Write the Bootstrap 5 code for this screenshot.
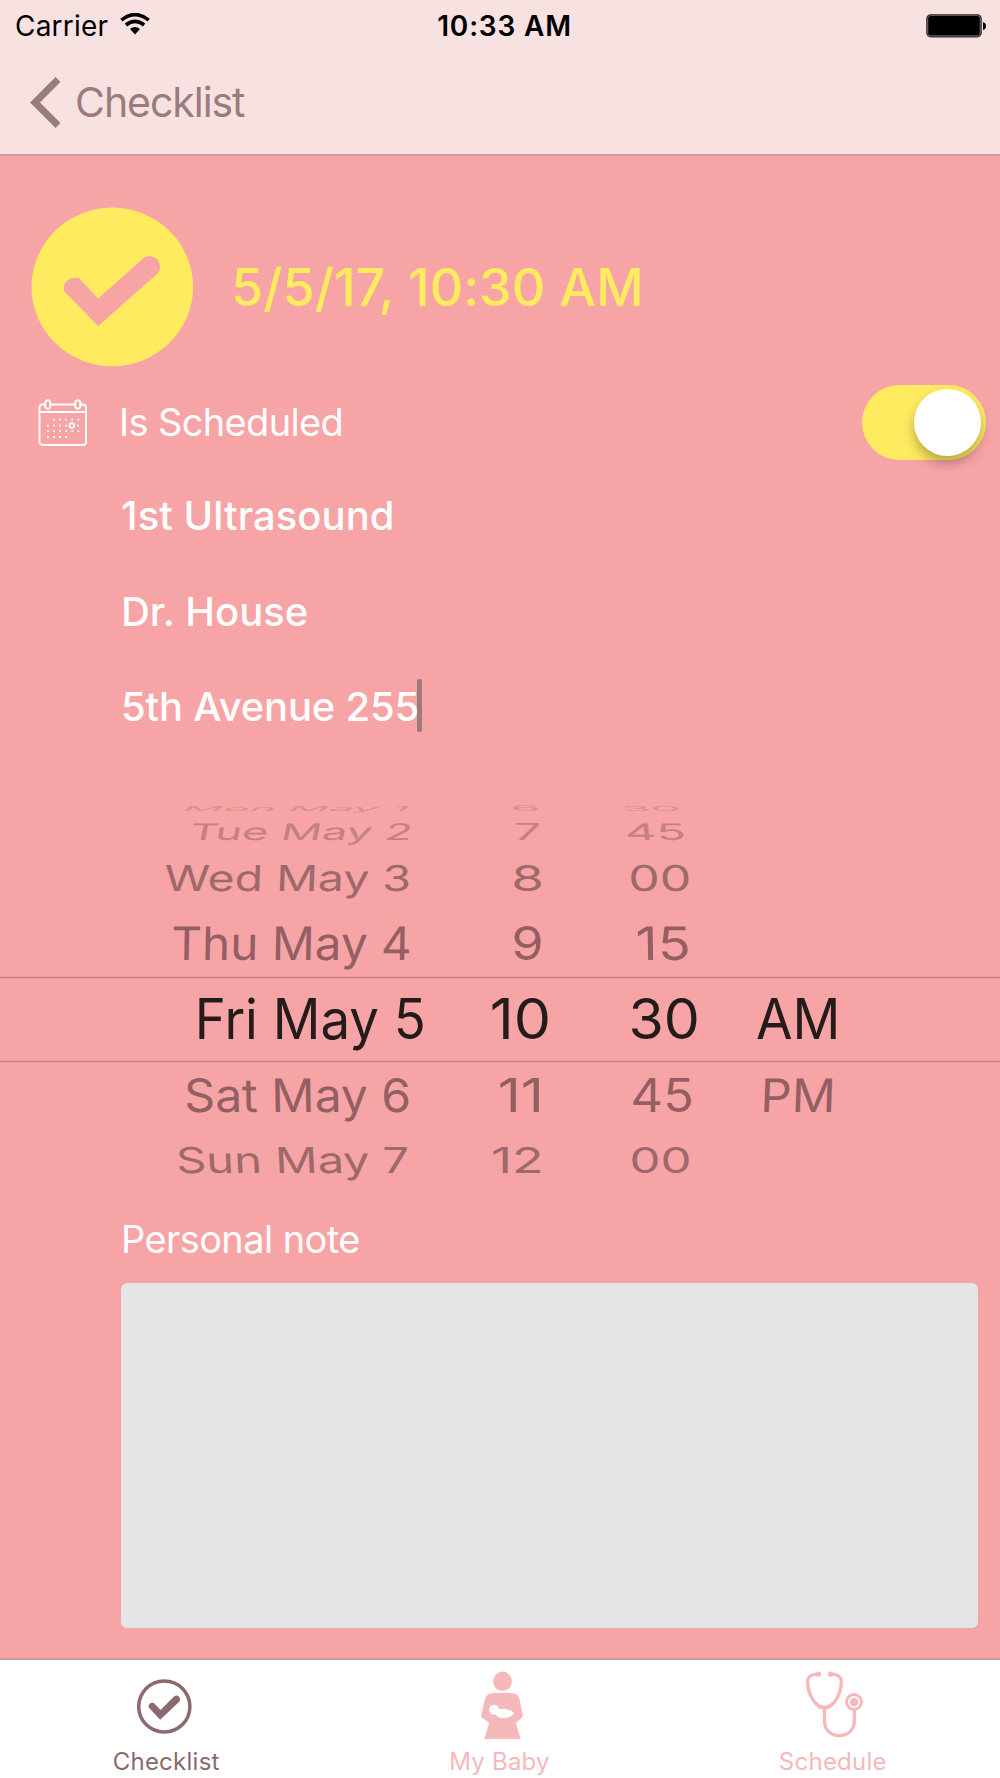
<!DOCTYPE html>
<html lang="en">
<head>
  <meta charset="UTF-8">
  <meta name="viewport" content="width=device-width, initial-scale=1">
  <title>Checklist</title>
  <link href="https://cdn.jsdelivr.net/npm/bootstrap@5.3.0/dist/css/bootstrap.min.css" rel="stylesheet">
  <style>
    body {
      width: 1000px;
      height: 1778px;
      overflow: hidden;
      background: #f7a4a6;
      font-family: Inter, "Liberation Sans", sans-serif;
      line-height: 1;
    }
    svg { display: block; flex: none; }
    .top-area { height: 156px; background: #f7e2e1; border-bottom: 2px solid #cf9c9d; }
    .status-bar { height: 51px; padding: 0 14px 0 15px; color: #000; font-size: 28px; }
    .status-bar > div { flex: 1 1 0; }
    .carrier { letter-spacing: .2px; }
    .wifi { margin-left: 12px; margin-top: -3px; }
    .clock { font-size: 28px; font-weight: 600; letter-spacing: .8px; }
    .back-link { height: 102px; padding-left: 29px; gap: 15px; color: #9b7b7e; font-size: 41px; letter-spacing: -1.05px; }
    .hero { padding: 51px 0 0 31px; gap: 37px; color: #ffeb60; }
    .due-date { padding-top: 1px; font-size: 52px; font-weight: 500; letter-spacing: .05px; }
    .schedule-row { height: 75px; margin-top: 18px; padding: 0 14px 0 38px; color: #fff; }
    .schedule-row label { margin-left: 32px; padding-bottom: 2px; font-size: 38px; letter-spacing: -.65px; }
    .form-switch .ios-toggle { width: 124px; height: 75px; margin: 0; border: 0; border-radius: 38px; background: #ffeb60; box-shadow: none; }
    .toggle-knob { top: 4px; right: 5px; width: 67px; height: 67px; background: #fff; box-shadow: 0 7px 12px rgba(0, 0, 0, .28); pointer-events: none; }
    .detail-fields { margin-top: 7px; padding-left: 121px; color: #fff; font-size: 40px; font-weight: 500; }
    .detail-line { height: 96px; }
    .detail-line:first-child { height: 97px; letter-spacing: .05px; }
    .detail-line:last-child { height: 93px; letter-spacing: -.2px; }
    .caret { width: 5px; height: 53px; margin: -2px 0 0 -2px; border-radius: 2px; background: #9b7b7e; }
    .picker { margin-top: 37px; }
    .note-label { height: 88px; margin: 5px 0 0 121px; color: #fff; font-size: 38px; letter-spacing: -.6px; }
    .note-box { width: 857px; height: 345px; margin-left: 121px; border: 0; border-radius: 6px; background: #e5e5e5; resize: none; }
    .tab-bar { height: 120px; background: #fff; border-top: 2px solid #cd9799; }
    .tab-bar .nav-link { padding: 0 1px 0 0; gap: 10px; color: #f5b8bb; font-size: 24px; letter-spacing: .25px; }
    .tab-bar .nav-link.active { color: #8b6a6c; }
  </style>
</head>
<body class="d-flex flex-column">
  <header class="top-area">
    <div class="status-bar d-flex align-items-center">
      <div class="d-flex align-items-center">
        <span class="carrier">Carrier</span>
        <svg class="wifi" width="30" height="22" viewBox="0 0 30 22">
          <g fill="none" stroke="#000" stroke-width="3.6">
            <path d="M1.300 7.100Q15-4 28.700 7.100"/>
            <path d="M5.900 12Q15 4.600 24.100 12"/>
          </g>
          <path d="M10 16Q15 12 20 16L15 21.500Z"/>
        </svg>
      </div>
      <div class="clock text-center ps-2"><span>10:33 AM</span></div>
      <div class="d-flex justify-content-end">
        <svg width="60" height="24" viewBox="0 0 60 24">
          <rect x=".8" y=".8" width="54.4" height="22" rx="4" fill="#8b7f7f" stroke="#2c2828" stroke-width="1.2"/>
          <rect x="2.2" y="2" width="51.6" height="19.4" rx="2.5"/>
          <path d="M57 8q3 1 3 4t-3 4z"/>
        </svg>
      </div>
    </div>
    <a href="#" class="back-link d-flex align-items-center text-decoration-none">
      <svg width="31" height="51" viewBox="0 0 31 51"><path d="M29 2.500L6 25.500 29 48.500" fill="none" stroke="#9b7b7e" stroke-width="7"/></svg>
      <span>Checklist</span>
    </a>
  </header>

  <main>
    <div class="hero d-flex align-items-center">
      <svg width="163" height="160" viewBox="0 0 163 160">
        <ellipse cx="81.300" cy="79.900" rx="80.800" ry="79.300" fill="#ffeb60"/>
        <path d="M33 84V80C33 75 38 70.800 44 70.800H47.500L67.200 91.500 111.500 52C114 49.500 116 49.200 120 49.200 125 50 129 54 129 60C129 63 128.500 64.500 126 67L67.200 119Z" fill="#f7a4a6"/>
      </svg>
      <span class="due-date">5/5/17, 10:30 AM</span>
    </div>

    <div class="schedule-row d-flex align-items-center">
      <svg width="49" height="47" viewBox="0 0 49 47" fill="none" stroke="#fff" stroke-width="1.9">
        <rect x="1.500" y="5.500" width="46.500" height="40.500" rx="3"/>
        <path d="M1.500 13H48"/>
        <rect x="7.300" y="1.200" width="5" height="8.500" rx="2.500" fill="#f7a4a6"/>
        <rect x="37.300" y="1.200" width="5" height="8.500" rx="2.500" fill="#f7a4a6"/>
        <g stroke-width="1.800" stroke-dasharray="1.800 4.300">
          <path d="M15 20.700H41.500"/>
          <path d="M9 26.700H29M39 26.700H41.500"/>
          <path d="M9 32.200H41.500"/>
          <path d="M9 38H29.500"/>
        </g>
        <circle cx="33.800" cy="26.600" r="2.300" fill="#f7a4a6" stroke-width="1.900"/>
      </svg>
      <label for="isScheduled">Is Scheduled</label>
      <div class="form-switch position-relative ms-auto p-0">
        <input class="form-check-input ios-toggle float-none d-block" type="checkbox" role="switch" id="isScheduled" style="background-image: none" checked>
        <span class="toggle-knob position-absolute rounded-circle"></span>
      </div>
    </div>

    <div class="detail-fields">
      <div class="detail-line d-flex align-items-center"><span>1st Ultrasound</span></div>
      <div class="detail-line d-flex align-items-center"><span>Dr. House</span></div>
      <div class="detail-line d-flex align-items-center"><span>5th Avenue 255</span><i class="caret"></i></div>
    </div>

    <!-- date wheel: rows flatten and lean as they turn away from the middle -->
    <svg class="picker" id="picker" width="1000" height="400" viewBox="0 790 1000 400">
      <path d="M0 977.500H1000M0 1061.500H1000" stroke="#c28385" stroke-width="1.600"/>
    </svg>

    <label class="note-label d-flex align-items-center" for="note">Personal note</label>
    <textarea class="note-box form-control" id="note"></textarea>
  </main>

  <nav class="tab-bar nav nav-fill mt-auto flex-nowrap">
    <a class="nav-link active d-flex flex-column align-items-center" href="#">
      <svg width="110" height="80" viewBox="111.500 1660 110 80">
        <circle cx="164.800" cy="1706.500" r="25.600" fill="none" stroke="#8b6a6c" stroke-width="3.500"/>
        <path d="M149 1706.500C149 1703 153.500 1701.500 155.300 1704L161 1710 174.500 1696.600C177 1694 181 1696 180.500 1700L180 1701.500 160.700 1719.700 149.700 1708Z" fill="#8b6a6c"/>
      </svg>
      <span>Checklist</span>
    </a>
    <a class="nav-link d-flex flex-column align-items-center" href="#">
      <svg width="110" height="80" viewBox="444.500 1660 110 80">
        <g fill="#f5b8bb">
          <ellipse cx="503" cy="1681.300" rx="9.300" ry="9.700"/>
          <path d="M494 1693H512Q518.500 1693 520 1699L523.300 1715.500Q523.500 1717 522 1718L516.300 1722.800 521.200 1739H484.800L489.700 1722.800 483 1718Q481.300 1717 481.700 1715.500L485.500 1699Q487 1693 494 1693Z"/>
        </g>
        <circle cx="494.700" cy="1709.700" r="5" fill="#fff"/>
        <path d="M498 1711Q500 1708.300 504 1708.700 511 1709.500 515 1713 511 1718 504 1718.200 497 1718 496.500 1714Z" fill="#fff"/>
      </svg>
      <span>My Baby</span>
    </a>
    <a class="nav-link d-flex flex-column align-items-center" href="#">
      <svg width="110" height="80" viewBox="777 1660 110 80">
        <g fill="none" stroke="#f5b8bb" stroke-width="3.300">
          <path d="M817 1674.200C809 1674.500 806.700 1677 806.700 1682C806.700 1694 814 1707 823.500 1707.500 833 1707 840.300 1694 840.300 1682C840.300 1677 838 1674.500 830 1674.200"/>
          <path d="M823.500 1707V1721C823.500 1740.500 853.300 1740.500 853.300 1721V1710"/>
          <circle cx="853" cy="1702" r="7.500" stroke-width="2.800"/>
        </g>
        <path d="M811 1699Q817 1705.500 823.500 1706 830 1705.500 836 1699 832 1709.800 823.500 1709.800 815 1709.800 811 1699Z" fill="#f5b8bb"/>
        <g fill="#f5b8bb">
          <circle cx="817.500" cy="1674.200" r="2.600"/>
          <circle cx="829.500" cy="1674.200" r="2.600"/>
          <circle cx="853" cy="1702" r="4.300"/>
        </g>
      </svg>
      <span>Schedule</span>
    </a>
  </nav>

  <script src="https://cdn.jsdelivr.net/npm/bootstrap@5.3.0/dist/js/bootstrap.bundle.min.js"></script>
  <script>
    // baseline, cap height, colour, then [text, left, right, lean] for each column
    const rows = [
      [811, 5, '#d98e90', [['Mon May 1', 184, 403, -50], ['6', 513, 538, 0], ['30', 625, 679, 22]]],
      [840, 16.5, '#c48082', [['Tue May 2', 190, 408, -11], ['7', 516, 539, 0], ['45', 628, 684, 6]]],
      [891, 26, '#9e696b', [['Wed May 3', 165, 408, -2], ['8', 514, 541, 0], ['00', 631, 689, 1]]],
      [960, 33.5, '#935f62', [['Thu May 4', 173, 409, -1], ['9', 514, 541, 0], ['15', 638, 688, 1]]],
      [1039, 40.5, '#241b1b', [['Fri May 5', 199, 423, 0], ['10', 492, 548, 0], ['30', 632, 697, 0], ['AM', 757, 836, 0]]],
      [1111.7, 33.5, '#935f62', [['Sat May 6', 187, 409, 1], ['11', 500, 539, 0], ['45', 633, 691, 0], ['PM', 764, 831, -2]]],
      [1173, 26, '#9e696b', [['Sun May 7', 179, 408, 3], ['12', 493, 540, 0], ['00', 632, 689, 0]]]
    ];
    const picker = document.getElementById('picker');
    const ctx = document.createElement('canvas').getContext('2d');
    ctx.font = '400 100px Inter';

    rows.forEach(([baseline, cap, color, cells]) => {
      cells.forEach(([text, left, right, lean]) => {
        const m = ctx.measureText(text);
        const inkWidth = m.actualBoundingBoxLeft + m.actualBoundingBoxRight;
        const sx = (right - left) / inkWidth;
        const sy = cap / 72.7;
        const el = document.createElementNS('http://www.w3.org/2000/svg', 'text');
        const x = left + m.actualBoundingBoxLeft * sx;
        el.setAttribute('transform', `translate(${x} ${baseline}) skewX(${lean}) scale(${sx} ${sy})`);
        el.setAttribute('font-size', 100);
        el.setAttribute('fill', color);
        el.textContent = text;
        picker.appendChild(el);
      });
    });
  </script>
</body>
</html>
